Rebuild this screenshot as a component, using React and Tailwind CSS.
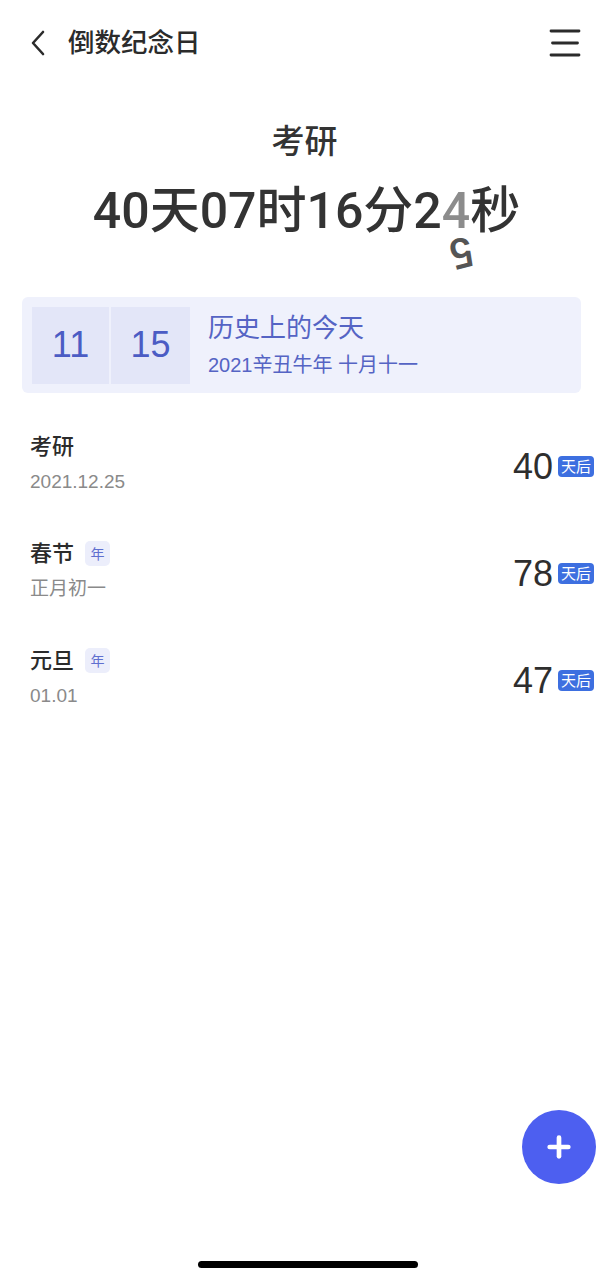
import { Plus } from 'lucide-react'

const events = [
  { title: '考研', sub: '2021.12.25', days: 40, yearly: false },
  { title: '春节', sub: '正月初一', days: 78, yearly: true },
  { title: '元旦', sub: '01.01', days: 47, yearly: true },
]

function Row({ ev }) {
  return (
    <div className="flex items-center justify-between h-[107px] pl-[30px] pr-[9px]">
      <div className="flex flex-col">
        <div className="flex items-center gap-[11px] h-[28px]">
          <span className="text-[22px] font-medium text-[#2b2b2b] leading-none">{ev.title}</span>
          {ev.yearly && (
            <span className="w-[25px] h-[25px] rounded-[5px] bg-[#eceefb] text-[#5f6fcf] text-[14px] flex items-center justify-center leading-none">
              年
            </span>
          )}
        </div>
        <span className="mt-[11px] text-[19px] text-[#8a8a8a] leading-none">{ev.sub}</span>
      </div>
      <div className="flex items-center gap-[5px] mt-[10px]">
        <span className="text-[36px] text-[#2e2e2e] leading-none">{ev.days}</span>
        <span className="h-[21px] px-[3px] rounded-[4px] bg-[#3d6fe0] text-white text-[15px] leading-none flex items-center">天后</span>
      </div>
    </div>
  )
}

export default function App() {
  return (
    <div
      className="relative w-[603px] h-[1280px] bg-white overflow-hidden"
      style={{ fontFamily: '"Liberation Sans", "Noto Sans CJK SC", sans-serif' }}
    >
      {/* header */}
      <div className="flex items-center justify-between pt-[28px] pl-[28px] pr-[22px] h-[58px]">
        <div className="flex items-center gap-[20px]">
          <svg width="20" height="28" viewBox="0 0 20 28" fill="none">
            <path d="M15 3 L5 14 L15 25" stroke="#2b2b2b" strokeWidth="2.6" strokeLinecap="round" strokeLinejoin="round" />
          </svg>
          <span className="text-[26.5px] font-medium text-[#2b2b2b] leading-none">倒数纪念日</span>
        </div>
        <svg width="32" height="28" viewBox="0 0 32 28" fill="none">
          <path d="M2 2 H30 M3.5 14 H28.5 M2 26 H30" stroke="#2b2b2b" strokeWidth="2.8" strokeLinecap="round" />
        </svg>
      </div>

      {/* current countdown */}
      <div className="flex flex-col items-center mt-[67px] pl-[10px]">
        <span className="text-[33px] font-medium text-[#333] leading-none pr-[4px]">考研</span>
        <div
          className="mt-[28px] flex items-center text-[50px] font-medium text-[#333] leading-none"
          style={{ fontFamily: 'Roboto, "Noto Sans CJK SC", sans-serif' }}
        >
          <span>40天07时16分2</span>
          <span className="relative">
            <span className="text-[#8c8c8c]">4</span>
            <span className="absolute left-[8px] top-[45px] text-[#555] text-[42px] rotate-[165deg] origin-center">5</span>
          </span>
          <span>秒</span>
        </div>
      </div>

      {/* today card */}
      <div className="mt-[61px] mx-[22px] h-[96px] bg-[#eff1fc] rounded-[6px] flex items-center px-[10px] gap-[2px]">
        <div className="w-[77px] h-[77px] bg-[#e3e6f8] flex items-center justify-center text-[36px] text-[#4b5cc4]">11</div>
        <div className="w-[79px] h-[77px] bg-[#e3e6f8] flex items-center justify-center text-[36px] text-[#4b5cc4]">15</div>
        <div className="ml-[16px] flex flex-col">
          <span className="text-[26px] text-[#5564c4] leading-none">历史上的今天</span>
          <span className="mt-[14px] text-[20px] text-[#5564c4] leading-none">2021辛丑牛年 十月十一</span>
        </div>
      </div>

      {/* list */}
      <div className="mt-[15px] flex flex-col">
        {events.map((ev) => (
          <Row key={ev.title} ev={ev} />
        ))}
      </div>

      {/* fab */}
      <button
        type="button"
        className="absolute left-[522px] top-[1110px] w-[74px] h-[74px] rounded-full bg-[#4d5ff0] flex items-center justify-center"
      >
        <Plus className="w-[32px] h-[32px] text-white" strokeWidth={3.5} />
      </button>

      {/* home indicator */}
      <div className="absolute left-[198px] top-[1261px] w-[220px] h-[7px] rounded-full bg-black" />
    </div>
  )
}
